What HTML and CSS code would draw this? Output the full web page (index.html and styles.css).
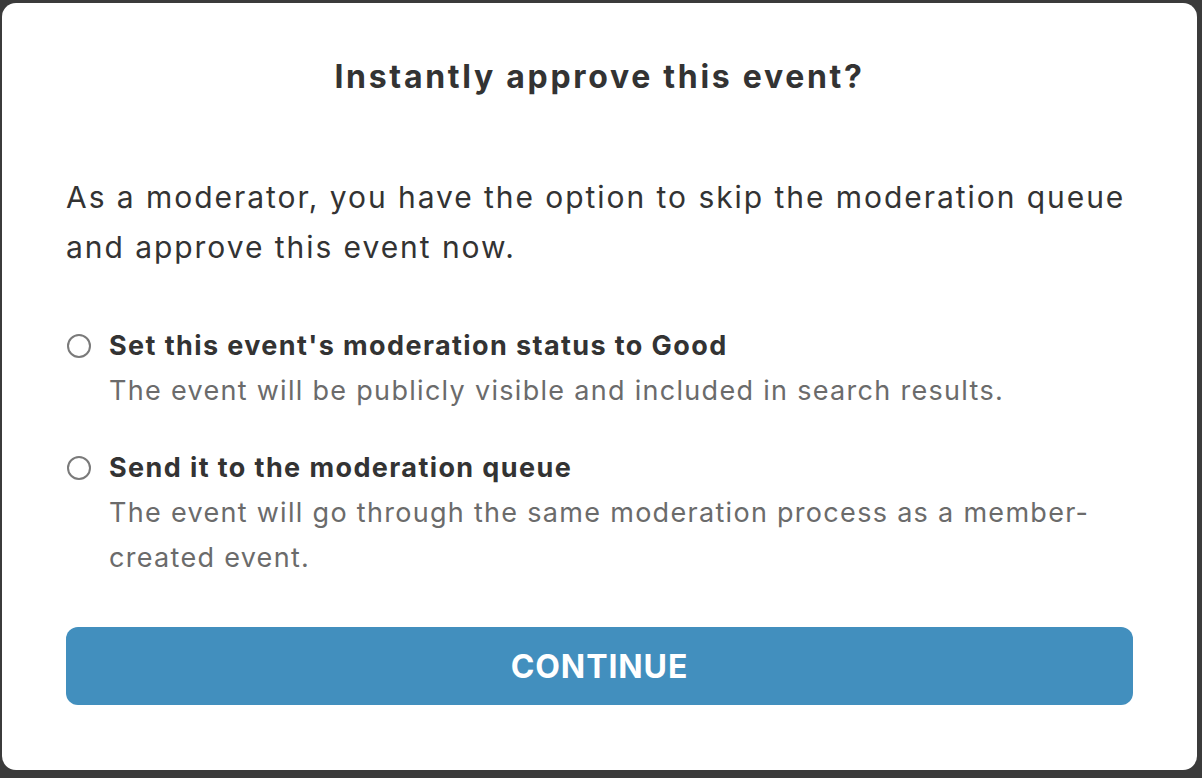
FILE: index.html
```html
<!DOCTYPE html>
<html lang="en">
<head>
<meta charset="utf-8">
<title>Instantly approve this event?</title>
<link rel="stylesheet" href="styles.css">
</head>
<body>
<div class="backdrop">
  <div class="modal">
    <h1 class="title">Instantly approve this event?</h1>
    <p class="intro">As a moderator, you have the option to skip the moderation queue and approve this event now.</p>
    <div class="options">
      <label class="option">
        <span class="radio"></span>
        <span class="option-text">
          <span class="option-label">Set this event's moderation status to Good</span>
          <span class="option-desc">The event will be publicly visible and included in search results.</span>
        </span>
      </label>
      <label class="option">
        <span class="radio"></span>
        <span class="option-text">
          <span class="option-label">Send it to the moderation queue</span>
          <span class="option-desc">The event will go through the same moderation process as a member-created event.</span>
        </span>
      </label>
    </div>
    <button class="continue">CONTINUE</button>
  </div>
</div>
</body>
</html>
```

FILE: styles.css
```css
html, body {
  margin: 0;
  padding: 0;
  background: #3b3b3b;
}

.backdrop {
  width: 1202px;
  height: 778px;
  box-sizing: border-box;
  padding: 3px 5px 8px 2px;
  display: flex;
}

.modal {
  flex: 1;
  background: #ffffff;
  border-radius: 14px;
  box-sizing: border-box;
  padding: 0 64px;
  display: flex;
  flex-direction: column;
  font-family: Inter, "Noto Sans", sans-serif;
  color: #333333;
}

.title {
  margin: 50px 0 0;
  text-align: center;
  font-size: 32px;
  font-weight: 700;
  line-height: 48px;
  letter-spacing: 2.7px;
  color: #333333;
}

.intro {
  margin: 71px 0 0;
  font-size: 30px;
  line-height: 50px;
  font-weight: 400;
  letter-spacing: 1.95px;
  color: #333333;
}

.options {
  margin-top: 52px;
  display: flex;
  flex-direction: column;
  gap: 33px;
}

.option {
  display: flex;
  align-items: flex-start;
  gap: 18px;
}

.radio {
  flex: none;
  width: 24px;
  height: 24px;
  margin-top: 10px;
  margin-left: 1px;
  border: 2px solid #7a7a7a;
  border-radius: 50%;
  box-sizing: border-box;
}

.option-text {
  display: flex;
  flex-direction: column;
}

.option-label {
  font-size: 27px;
  font-weight: 700;
  line-height: 44px;
  letter-spacing: 1.4px;
  color: #333333;
}

.option-desc {
  font-size: 27px;
  line-height: 45px;
  letter-spacing: 1.3px;
  color: #6b6b6b;
}

.continue {
  margin-top: 47px;
  height: 78px;
  border: none;
  border-radius: 12px;
  background: #428fbe;
  color: #ffffff;
  font-family: Inter, "Noto Sans", sans-serif;
  font-size: 32px;
  font-weight: 700;
  letter-spacing: 0.9px;
  cursor: pointer;
}
```
